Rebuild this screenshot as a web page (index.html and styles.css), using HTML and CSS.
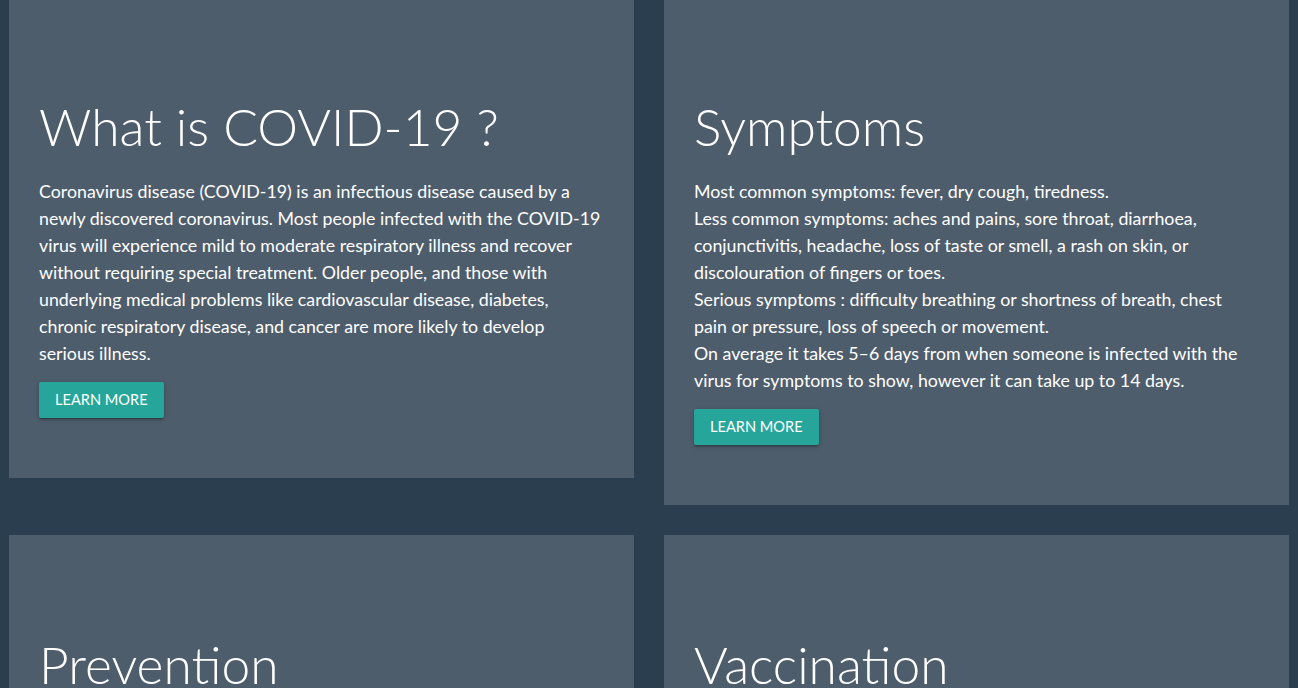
FILE: index.html
```html
<!DOCTYPE html>
<html lang="en">
<head>
<meta charset="utf-8">
<title>COVID-19</title>
<link rel="stylesheet" href="styles.css">
</head>
<body>
<main class="grid">
  <section class="card">
    <h2 class="card-title">What is COVID-19 ?</h2>
    <p class="card-text">Coronavirus disease (COVID-19) is an infectious disease caused by a newly discovered coronavirus. Most people infected with the <span class="nowrap">COVID-19</span> virus will experience mild to moderate respiratory illness and recover without requiring special treatment. Older people, and those with underlying medical problems like cardiovascular disease, diabetes, chronic respiratory disease, and cancer are more likely to develop serious illness.</p>
    <a class="btn" href="#">Learn more</a>
  </section>
  <section class="card">
    <h2 class="card-title">Symptoms</h2>
    <p class="card-text">Most common symptoms: fever, dry cough, tiredness.<br>Less common symptoms: aches and pains, sore throat, diarrhoea, conjunctivitis, headache, loss of taste or smell, a rash on skin, or discolouration of fingers or toes.<br>Serious symptoms : difficulty breathing or shortness of breath, chest pain or pressure, loss of speech or movement.<br>On average it takes 5–6 days from when someone is infected with the virus for symptoms to show, however it can take up to 14 days.</p>
    <a class="btn" href="#">Learn more</a>
  </section>
  <section class="card">
    <h2 class="card-title">Prevention</h2>
    <p class="card-text">Protect yourself and those around you: keep physical distance, wear a mask, keep rooms well ventilated, avoid crowds, clean your hands, and cough into a bent elbow or tissue.</p>
    <a class="btn" href="#">Learn more</a>
  </section>
  <section class="card">
    <h2 class="card-title">Vaccination</h2>
    <p class="card-text">Get vaccinated as soon as it's your turn and follow local guidance. Vaccines protect you against serious illness and death from COVID-19.</p>
    <a class="btn" href="#">Learn more</a>
  </section>
</main>
</body>
</html>
```
FILE: styles.css
```css
html, body {
  margin: 0;
  padding: 0;
  background: #2b3e50;
}
body {
  font-family: Lato, "Open Sans", sans-serif;
  color: #ffffff;
  overflow: hidden;
}
.grid {
  display: grid;
  grid-template-columns: 625px 625px;
  column-gap: 30px;
  row-gap: 30px;
  align-items: start;
  padding: 0 9px;
  margin-top: -3px;
}
.card {
  background: #4e5d6c;
  padding: 30px 30px 60px;
}
.card-title {
  font-weight: 300;
  font-size: 51.5px;
  line-height: 1.1;
  margin: 71px 0 23px;
}
.card-text {
  font-size: 17.8px;
  line-height: 27px;
  margin: 0 0 15px;
}
.nowrap {
  white-space: nowrap;
}
.btn {
  display: inline-block;
  height: 36px;
  line-height: 36px;
  padding: 0 16px;
  background: #26a69a;
  color: #ffffff;
  text-decoration: none;
  text-transform: uppercase;
  font-size: 14.6px;
  border-radius: 2px;
  box-shadow: 0 2px 2px 0 rgba(0,0,0,0.14), 0 3px 1px -2px rgba(0,0,0,0.12), 0 1px 5px 0 rgba(0,0,0,0.2);
  vertical-align: top;
}
```
